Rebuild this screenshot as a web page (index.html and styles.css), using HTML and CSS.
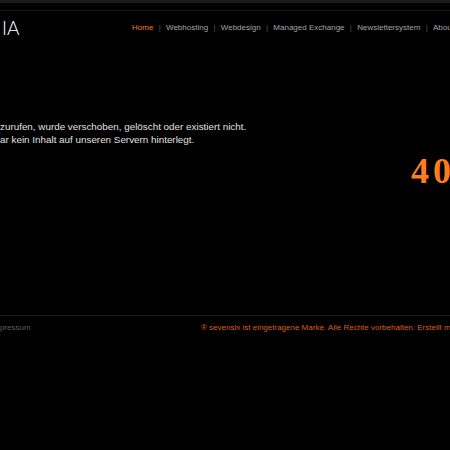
FILE: index.html
```html
<!DOCTYPE html>
<html>
<head>
	<meta charset="utf-8">
	<title>Seite nicht gefunden</title>
	<link rel="stylesheet" href="styles.css">
</head>
<body>
<div class="page">
	<div class="topbar"></div>
	<div class="topline"></div>

	<div class="header">
		<div class="logo">IA</div>
		<ul class="nav">
			<li><a class="active" href="#">Home</a></li>
			<li class="sep">|</li>
			<li><a href="#">Webhosting</a></li>
			<li class="sep">|</li>
			<li><a href="#">Webdesign</a></li>
			<li class="sep">|</li>
			<li><a href="#">Managed Exchange</a></li>
			<li class="sep">|</li>
			<li><a href="#">Newslettersystem</a></li>
			<li class="sep">|</li>
			<li><a href="#">About</a></li>
		</ul>
	</div>

	<div class="main">
		<div class="msg">
			<p>zurufen, wurde verschoben, gelöscht oder existiert nicht.</p>
			<p>ar kein Inhalt auf unseren Servern hinterlegt.</p>
		</div>
		<div class="code">404</div>
	</div>

	<div class="footer">
		<a class="imprint" href="#">Impressum</a>
		<span class="copy">® sevensix ist eingetragene Marke. Alle Rechte vorbehalten. Erstellt mit</span>
	</div>
</div>
</body>
</html>
```

FILE: styles.css
```css
html, body {
	background: #000;
	margin: 0px;
	padding: 0px;
	overflow: hidden;
}
body {
	font-family: 'Liberation Sans', Arial, Helvetica, sans-serif;
	color: #e0e0e0;
}
.page {
	width: 640px;
}
.topbar {
	height: 3px;
	background: #1c1c1c;
}
.topline {
	height: 1px;
	margin-top: 7px;
	background: #161616;
}

/* header: logo + menu */
.header {
	display: flex;
	align-items: center;
	height: 32px;
}
.logo {
	font-family: Lato, 'Open Sans', sans-serif;
	font-weight: 300;
	font-size: 19px;
	line-height: 1;
	color: #fff;
	padding-left: 2px;
	width: 130px;
	flex: none;
}
.nav {
	display: flex;
	list-style: none;
	margin: 0px;
	padding: 0px;
	font-size: 8px;
	white-space: nowrap;
}
.nav a {
	color: #a4a4a4;
	text-decoration: none;
}
.nav a.active {
	color: #f47a20;
}
.nav .sep {
	color: #5a5a5a;
	margin: 0 5.3px;
}

/* error message */
.main {
	display: flex;
	margin-top: 77px;
	height: 195px;
}
.msg {
	flex: 0 0 411px;
	font-size: 9.85px;
	line-height: 13px;
	white-space: nowrap;
}
.msg p {
	margin: 0px;
}
.code {
	font-family: 'Liberation Serif', 'Times New Roman', serif;
	font-weight: bold;
	font-size: 36px;
	letter-spacing: 4px;
	line-height: 1;
	color: #ff7d1e;
	padding-top: 33px;
}

/* footer */
.footer {
	display: flex;
	align-items: center;
	border-top: 1px solid #1c1c1c;
	height: 22px;
	font-size: 8px;
	white-space: nowrap;
}
.imprint {
	color: #5e5e5e;
	text-decoration: none;
	margin-left: -9px;
	width: 210px;
	flex: none;
}
.copy {
	color: #dc5b1c;
}
```
